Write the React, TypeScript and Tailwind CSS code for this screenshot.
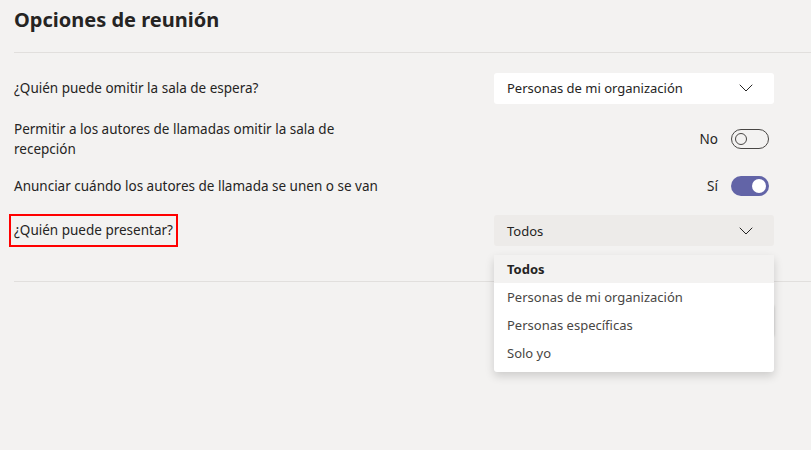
import { ChevronDown } from "lucide-react";

const font = { fontFamily: '"Segoe UI", "Noto Sans", sans-serif' };

function Toggle({ on }: { on: boolean }) {
  return on ? (
    <div className="flex h-5 w-[38px] items-center justify-end rounded-full bg-[#6264a7] pr-[3px]">
      <div className="h-[14px] w-[14px] rounded-full bg-white" />
    </div>
  ) : (
    <div className="flex h-5 w-[38px] items-center rounded-full border border-[#484644] pl-[3px]">
      <div className="h-3 w-3 rounded-full border border-[#484644]" />
    </div>
  );
}

export default function App() {
  return (
    <div
      className="relative h-[450px] w-[811px] overflow-hidden bg-[#f3f2f1] pl-[14px] text-[13.5px] leading-[20px] text-[#252423]"
      style={font}
    >
      <h1 className="pt-[5px] text-[20px] font-bold leading-[30px]">Opciones de reunión</h1>
      <div className="mt-[17px] h-px bg-[#e1dfdd]" />

      <div className="flex flex-col pr-[37px]">
        <div className="mt-[19px] flex h-[32px] items-center justify-between">
          <span>¿Quién puede omitir la sala de espera?</span>
          <div className="flex h-[31px] w-[280px] items-center justify-between rounded-[3px] bg-white pl-[13px] pr-[16px] text-[13px]">
            <span>Personas de mi organización</span>
            <ChevronDown size={24} strokeWidth={1} className="-my-2" />
          </div>
        </div>

        <div className="mt-[15px] flex items-center justify-between">
          <span className="w-[360px]">
            Permitir a los autores de llamadas omitir la sala de recepción
          </span>
          <div className="mr-[5px] flex items-center gap-[13px]">
            <span>No</span>
            <Toggle on={false} />
          </div>
        </div>

        <div className="mt-[17px] flex items-center justify-between">
          <span>Anunciar cuándo los autores de llamada se unen o se van</span>
          <div className="mr-[5px] flex items-center gap-[13px]">
            <span>Sí</span>
            <Toggle on />
          </div>
        </div>

        <div className="mt-[19px] flex h-[31px] items-center justify-between">
          <span className="-ml-[5px] border-2 border-[#ff0000] px-[3px] leading-[29px]">¿Quién puede presentar?</span>
          <div className="flex h-[31px] w-[280px] items-center justify-between rounded-[3px] bg-[#edebe9] pl-[13px] pr-[16px] text-[13px]">
            <span>Todos</span>
            <ChevronDown size={24} strokeWidth={1} className="-my-2" />
          </div>
        </div>
      </div>

      <div className="mt-[35px] h-px bg-[#e1dfdd]" />

      <div className="mt-[22px] flex justify-end pr-[37px]">
        <button className="h-[32px] w-[96px] rounded-[3px] bg-white shadow-[0_1px_3px_rgba(0,0,0,0.2)]">
          Guardar
        </button>
      </div>

      <div className="absolute left-[494px] top-[255px] w-[280px] rounded-[3px] bg-white pb-[5px] text-[13px] text-[#484644] shadow-[0_4px_10px_rgba(0,0,0,0.16)]">
        <div className="flex h-[28px] items-center bg-[#f3f2f1] pl-[13px] font-bold text-[#252423]">Todos</div>
        <div className="flex h-[28px] items-center pl-[13px]">Personas de mi organización</div>
        <div className="flex h-[28px] items-center pl-[13px]">Personas específicas</div>
        <div className="flex h-[28px] items-center pl-[13px]">Solo yo</div>
      </div>
    </div>
  );
}
